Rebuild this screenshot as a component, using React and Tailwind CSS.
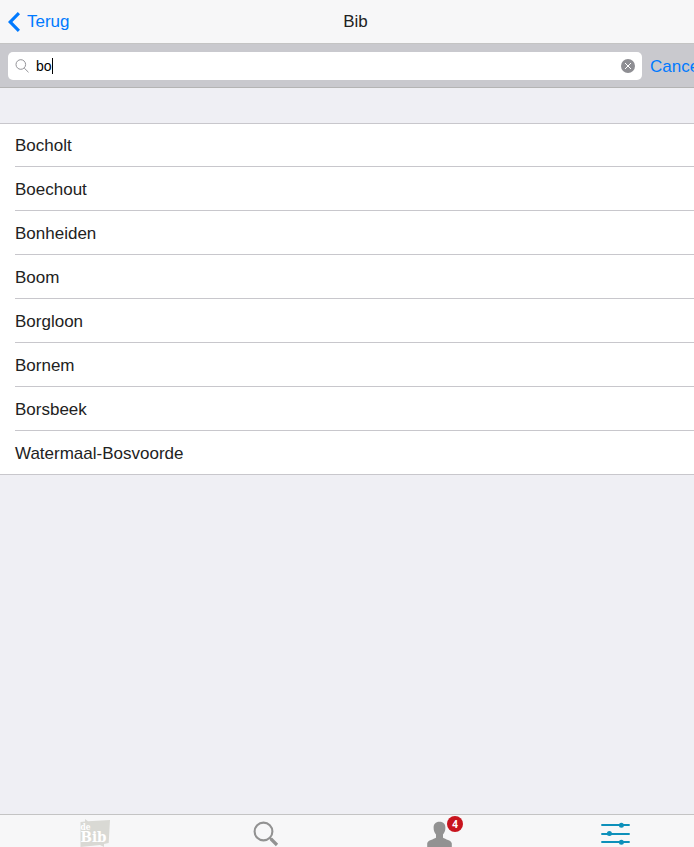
const towns = [
  'Bocholt',
  'Boechout',
  'Bonheiden',
  'Boom',
  'Borgloon',
  'Bornem',
  'Borsbeek',
  'Watermaal-Bosvoorde',
];

function Navbar() {
  return (
    <header className="grid h-11 shrink-0 grid-cols-[1fr_auto_1fr] items-center border-b border-[#c4c4c4] bg-[#f7f7f8] pl-2">
      <a className="flex items-center gap-[7px] text-[#007aff]">
        <svg width="12" height="20" viewBox="0 0 12 20" fill="currentColor">
          <path d="M9.800 0L12 2.200 4.400 10l7.600 7.800L9.800 20 0 10z" />
        </svg>
        <span>Terug</span>
      </a>
      <h1 className="pl-[9px]">Bib</h1>
      <span />
    </header>
  );
}

function SearchBar() {
  return (
    <div className="flex h-11 shrink-0 items-center overflow-hidden border-b border-[#b4b4b4] bg-[#c9c9ce] pl-2">
      <div className="flex h-7 w-[634px] shrink-0 items-center rounded-[5px] bg-white px-[7px]">
        <svg width="14" height="14" viewBox="0 0 14 14" fill="none" stroke="#939398" strokeWidth="1">
          <circle cx="5.8" cy="5.5" r="4.8" />
          <path d="M9.2 9l4.3 4.3" />
        </svg>
        <span className="ml-[7px] text-sm leading-4 text-black">bo</span>
        <span className="h-4 w-px bg-black" />
        <svg className="ml-auto" width="14" height="14" viewBox="0 0 14 14">
          <circle cx="7" cy="7" r="7" fill="#8e8e93" />
          <path d="M4 4l6 6M10 4l-6 6" stroke="#fff" strokeWidth="1" />
        </svg>
      </div>
      <span className="ml-2 shrink-0 pt-0.5 text-[#007aff]">Cancel</span>
    </div>
  );
}

function TownList() {
  return (
    <ul className="mt-[35px] border-y border-[#c8c7cc] bg-white pl-[15px]">
      {towns.map((town) => (
        <li
          key={town}
          className="flex h-11 items-center border-b border-[#c8c7cc] pt-0.5 first:h-[43px] last:h-[43px] last:border-b-0"
        >
          {town}
        </li>
      ))}
    </ul>
  );
}

function TabBar() {
  return (
    <nav className="flex h-[33px] shrink-0 items-start overflow-hidden border-t border-[#c4c4c4] bg-[#f7f7f8] pl-[79px]">
      <svg className="mt-[3px] shrink-0" width="32" height="32" viewBox="0 0 32 32">
        <path d="M1.500 4L6 3.500V1l3 2.300 22-1.300-1.300 23-4.700 1v3l-4-2-19.500 2z" fill="#d9d9d4" />
        <text x="1.500" y="11.500" fontSize="8.500" fontWeight="bold" fill="#fff" fontFamily="'DejaVu Serif', serif" textLength="10" lengthAdjust="spacingAndGlyphs">de</text>
        <text x="1.500" y="24" fontSize="14" fontWeight="bold" fill="#fff" fontFamily="'DejaVu Serif', serif" textLength="26" lengthAdjust="spacingAndGlyphs">Bib</text>
      </svg>
      <svg className="ml-[142px] mt-[6px] shrink-0" width="26" height="26" viewBox="0 0 26 26" fill="none" stroke="#929292">
        <circle cx="10.500" cy="10.500" r="8.900" strokeWidth="2.100" />
        <path d="M16.500 16.500l2 2" strokeWidth="2.400" />
        <path d="M18 18l6 6" strokeWidth="3.200" />
      </svg>
      <div className="relative ml-[148px] mt-[6px] shrink-0">
        <svg width="26" height="26" viewBox="0 0 26 26" fill="#929292">
          <path d="M12.500 .700C16.500 .700 18.500 3 18.400 6.800 18.300 10 17.600 11.600 16 13.500v3.300c2.300 1.700 8.200 2.200 8.800 5.700V26H.2v-3.500c.6-3.500 6.500-4 8.800-5.700v-3.300C7.400 11.600 6.700 10 6.600 6.800 6.500 3 8.500 .700 12.500 .700z" />
        </svg>
        <span className="absolute -top-[5px] left-5 flex size-4 items-center justify-center rounded-full bg-[#c8141e] font-['Open_Sans',sans-serif] text-[10px] font-bold leading-none text-white">
          4
        </span>
      </div>
      <svg className="ml-[148px] mt-[6px] shrink-0" width="30" height="26" viewBox="0 0 30 26" fill="#0d90ba">
        <path d="M.3 3h28.400v2H.3zM.3 12h28.400v2H.3zM.3 20h28.400v2H.3z" />
        <ellipse cx="20.400" cy="4.200" rx="2.500" ry="2.500" />
        <ellipse cx="8.400" cy="12.500" rx="2.500" ry="2.500" />
        <ellipse cx="20.400" cy="21.200" rx="2.500" ry="2.500" />
      </svg>
    </nav>
  );
}

export default function App() {
  return (
    <div className="flex h-screen flex-col overflow-hidden bg-[#efeff4] font-['Liberation_Sans',Arial,sans-serif] text-[17px] leading-5 text-[#222]">
      <Navbar />
      <SearchBar />
      <main className="flex-1">
        <TownList />
      </main>
      <TabBar />
    </div>
  );
}
